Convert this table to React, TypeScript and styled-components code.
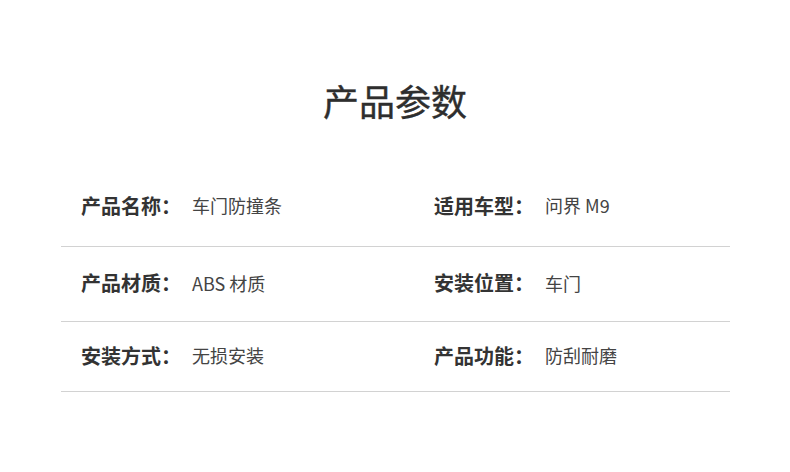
import styled, { createGlobalStyle } from "styled-components";

const GlobalStyle = createGlobalStyle`
  html, body {
    margin: 0;
    padding: 0;
    background: #fff;
  }
  body {
    font-family: "Noto Sans CJK SC", "Noto Sans", sans-serif;
    color: #333;
  }
`;

type Spec = { height: number; cells: [string, string][] };

const specs: Spec[] = [
  { height: 80, cells: [["产品名称：", "车门防撞条"], ["适用车型：", "问界 M9"]] },
  { height: 75, cells: [["产品材质：", "ABS 材质"], ["安装位置：", "车门"]] },
  { height: 70, cells: [["安装方式：", "无损安装"], ["产品功能：", "防刮耐磨"]] },
];

const App = () => {
  return (
    <>
      <GlobalStyle />
      <Page>
        <Title>产品参数</Title>
        <Table>
          {specs.map((row, i) => (
            <Row key={i} $height={row.height}>
              {row.cells.map(([label, value]) => (
                <Cell key={label}>
                  <Label>{label}</Label>
                  <Value>{value}</Value>
                </Cell>
              ))}
            </Row>
          ))}
        </Table>
      </Page>
    </>
  );
};

export default App;

const Page = styled.div`
  width: 790px;
  height: 472px;
  box-sizing: border-box;
  padding-top: 74px;
`;

const Title = styled.h1`
  margin: 0;
  text-align: center;
  font-size: 36px;
  line-height: 52px;
  font-weight: 400;
  color: #2e2e2e;
  -webkit-text-stroke: 0.4px #2e2e2e;
`;

const Table = styled.div`
  margin: 0 60px 0 61px;
  padding-top: 41px;
`;

const Row = styled.div<{ $height: number }>`
  display: grid;
  grid-template-columns: 353px 1fr;
  align-items: center;
  height: ${(p) => p.$height}px;
  padding: 0 20px 3px;
  border-bottom: 1px solid #d2d2d2;
  box-sizing: border-box;
`;

const Cell = styled.div`
  display: flex;
  align-items: center;
`;

const Label = styled.span`
  width: 111px;
  font-size: 20px;
  font-weight: 700;
  color: #333;
`;

const Value = styled.span`
  font-size: 18px;
  font-weight: 400;
  color: #444;
`;
